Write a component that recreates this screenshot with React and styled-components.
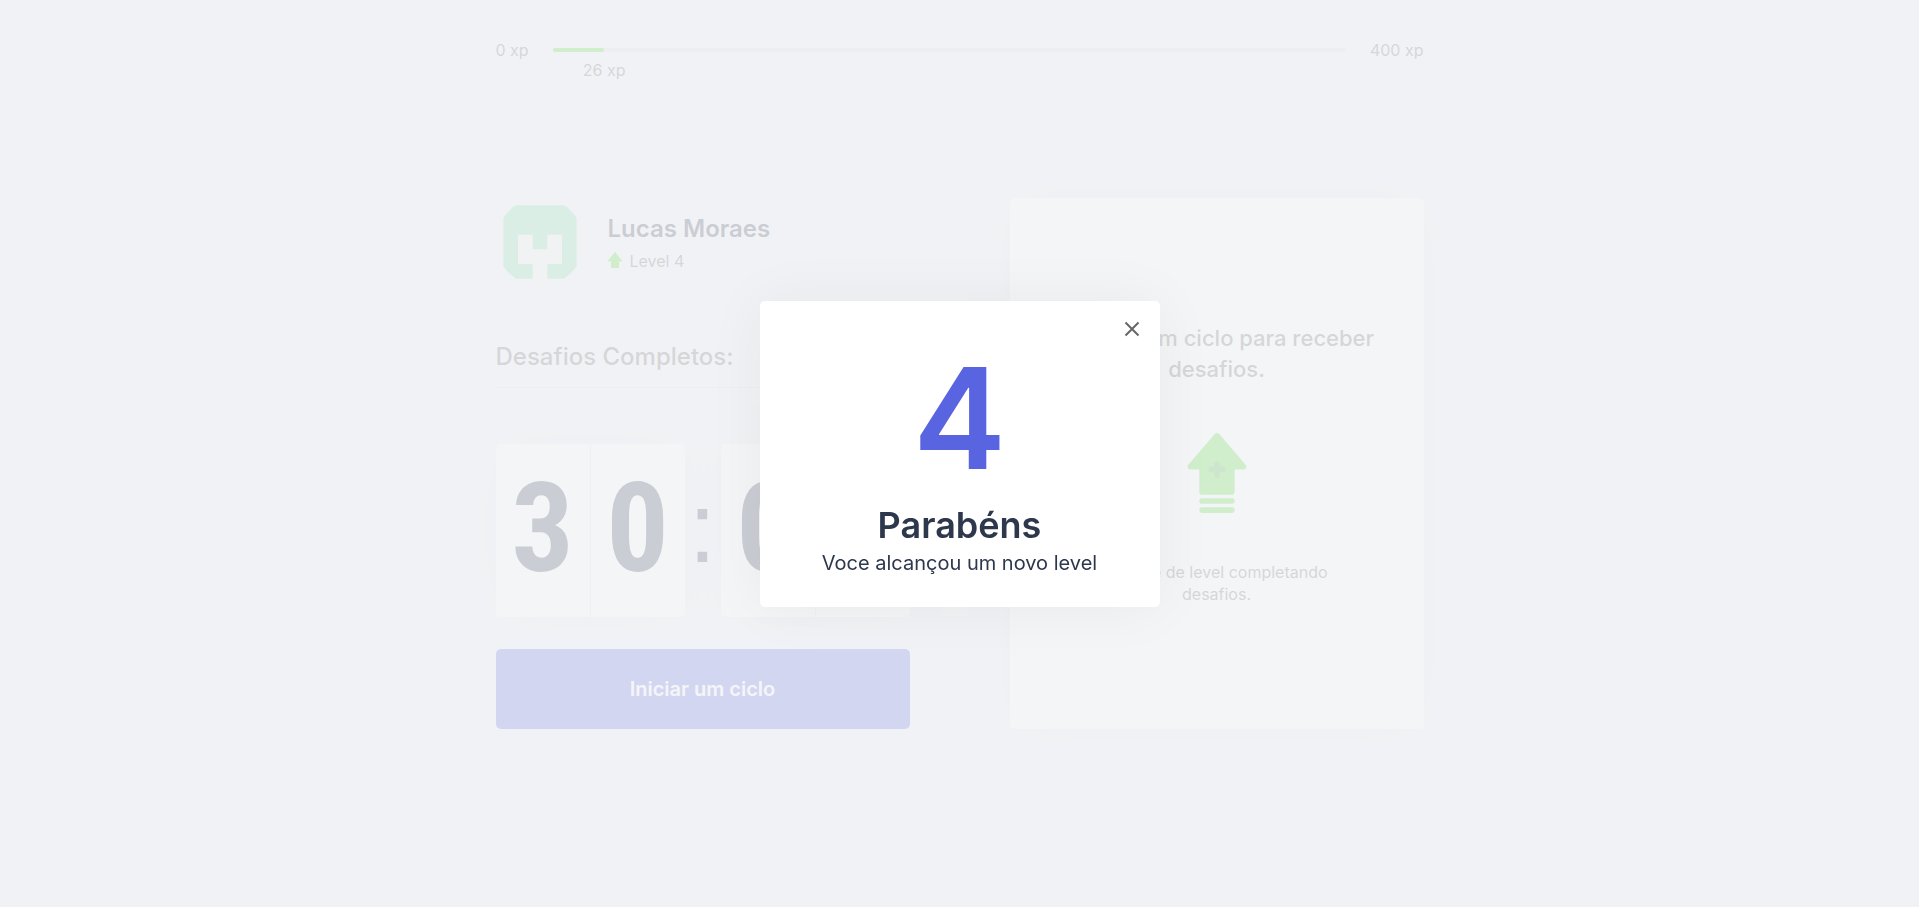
import React from 'react';
import styled, { createGlobalStyle, ThemeProvider } from 'styled-components';

const theme = {
  white: '#ffffff',
  background: '#f0f1f5',
  grayLine: '#dcdde0',
  text: '#666666',
  title: '#2e384d',
  green: '#4cd62b',
  greenDark: '#3cae30',
  blue: '#5965e0',
  shadow: '0 0 60px rgba(0, 0, 0, 0.05)',
};

const GlobalStyle = createGlobalStyle`
  * {
    margin: 0;
    padding: 0;
    box-sizing: border-box;
  }

  body {
    background: ${theme.background};
    color: ${theme.text};
  }

  body, button {
    font: 400 16px/20px Inter, sans-serif;
  }

  button {
    border: 0;
    cursor: pointer;
  }
`;

const Container = styled.div`
  display: flex;
  flex-direction: column;
  min-height: 100vh;
  max-width: 992px;
  margin: 0 auto;
  padding: 40px 32px;
`;

const ExperienceBar = styled.header`
  display: flex;
  align-items: center;
`;

const Track = styled.div`
  position: relative;
  flex: 1;
  height: 4px;
  margin: 0 24px;
  border-radius: 4px;
  background: ${({ theme }) => theme.grayLine};
`;

const Progress = styled.div`
  height: 4px;
  border-radius: 4px;
  background: ${({ theme }) => theme.green};
`;

const CurrentExperience = styled.span`
  position: absolute;
  top: 12px;
  transform: translateX(-50%);
`;

const Dashboard = styled.main`
  flex: 1;
  display: grid;
  grid-template-columns: 1fr 1fr;
  gap: 100px;
  align-content: center;
`;

const Profile = styled.div`
  display: flex;
  align-items: center;
`;

const Avatar = styled.svg`
  width: 88px;
  height: 88px;
  border-radius: 50%;
  background: #f0f0f0;
`;

const ProfileInfo = styled.div`
  margin-left: 24px;
`;

const UserName = styled.strong`
  display: block;
  font-size: 24px;
  font-weight: 600;
  line-height: 29px;
  color: ${({ theme }) => theme.title};
`;

const Level = styled.p`
  display: flex;
  align-items: center;
  gap: 8px;
  margin-top: 8px;
`;

const Completed = styled.div`
  margin: 56px 0;
  padding-bottom: 16px;
  border-bottom: 1px solid ${({ theme }) => theme.grayLine};
  display: flex;
  justify-content: space-between;
  font-size: 24px;
  font-weight: 500;
  line-height: 29px;
`;

const Countdown = styled.div`
  display: flex;
  align-items: center;
  font-family: "Liberation Sans Narrow", "Roboto Condensed", Roboto, sans-serif;
  font-weight: 700;
  color: ${({ theme }) => theme.title};
`;

const DigitPair = styled.div`
  flex: 1;
  display: flex;
  border-radius: 5px;
  background: ${({ theme }) => theme.white};
  box-shadow: ${({ theme }) => theme.shadow};
`;

const Digit = styled.span`
  flex: 1;
  padding-bottom: 3px;
  text-align: center;
  font-size: 124px;
  line-height: 170px;

  & + & {
    border-left: 1px solid #e4e5e9;
  }
`;

const Colon = styled.span`
  display: flex;
  justify-content: center;
  width: 36px;
  padding-bottom: 8px;
  font-family: "Liberation Sans", sans-serif;
  font-weight: 400;
  font-size: 100px;
  line-height: 120px;
`;

const StartButton = styled.button`
  display: block;
  width: 100%;
  height: 80px;
  margin-top: 32px;
  border-radius: 5px;
  background: ${({ theme }) => theme.blue};
  color: ${({ theme }) => theme.white};
  font-size: 20px;
  font-weight: 600;
`;

const ChallengeBox = styled.section`
  display: flex;
  flex-direction: column;
  align-items: center;
  justify-content: center;
  gap: 48px;
  padding: 24px 32px;
  border-radius: 5px;
  background: ${({ theme }) => theme.white};
  box-shadow: ${({ theme }) => theme.shadow};
  text-align: center;
`;

const ChallengeTitle = styled.h2`
  font-size: 22px;
  font-weight: 500;
  line-height: 31px;
`;

const ChallengeHint = styled.p`
  max-width: 70%;
  line-height: 22px;
`;

const Overlay = styled.div`
  position: fixed;
  inset: 0;
  display: flex;
  align-items: center;
  justify-content: center;
  background: rgba(241, 242, 245, 0.8);
`;

const Modal = styled.div`
  position: relative;
  width: 100%;
  max-width: 400px;
  padding: 32px 48px;
  border-radius: 5px;
  background: ${({ theme }) => theme.white};
  box-shadow: ${({ theme }) => theme.shadow};
  text-align: center;
  color: ${({ theme }) => theme.title};
`;

const NewLevel = styled.header`
  font-size: 140px;
  font-weight: 600;
  line-height: 170px;
  color: ${({ theme }) => theme.blue};
`;

const Congratulations = styled.strong`
  display: block;
  font-size: 36px;
  font-weight: 600;
  line-height: 44px;
`;

const ModalText = styled.p`
  margin-top: 4px;
  font-size: 20px;
  line-height: 24px;
`;

const CloseButton = styled.button`
  position: absolute;
  top: 16px;
  right: 16px;
  display: flex;
  background: transparent;
`;

function LevelIcon() {
  return (
    <svg width="14" height="18" viewBox="0 0 14 18" aria-hidden="true">
      <path d="M7 0 L14 8.4 Q14.2 9.4 13.3 9.4 H11 V16 H3 V9.4 H.7 Q-.2 9.4 0 8.4 Z" fill={theme.green} />
    </svg>
  );
}

function LevelUpIcon() {
  return (
    <svg width="60" height="80" viewBox="0 0 60 80" aria-hidden="true">
      <g fill={theme.green}>
        <path d="M27.7 .9 Q30 -.9 32.3 .9 L58.4 31.4 C60.7 33.8 59 36.4 56.6 36.4 H47.6 V59.5 Q47.6 61.8 45.3 61.8 H14.7 Q12.4 61.8 12.4 59.5 V36.4 H3.4 C1 36.4 -.7 33.8 1.6 31.4 Z" />
        <rect x="12.4" y="65.2" width="35.2" height="5.6" rx="2.4" />
        <rect x="12.4" y="74.3" width="35.2" height="5.6" rx="2.4" />
      </g>
      <path d="M30 30.7 V42.1 M24.3 36.4 H35.7" stroke={theme.greenDark} strokeWidth="5.6" strokeLinecap="round" />
    </svg>
  );
}

const digits = [['3', '0'], ['0', '0']];

export default function App() {
  const currentExperience = 26;
  const nextLevelExperience = 400;
  const percent = `${(currentExperience * 100) / nextLevelExperience}%`;

  return (
    <ThemeProvider theme={theme}>
      <GlobalStyle />
      <Container>
        <ExperienceBar>
          <span>0 xp</span>
          <Track>
            <Progress style={{ width: percent }} />
            <CurrentExperience style={{ left: percent }}>26 xp</CurrentExperience>
          </Track>
          <span>400 xp</span>
        </ExperienceBar>

        <Dashboard>
          <div>
            <Profile>
              <Avatar viewBox="0 0 420 420" role="img" aria-label="Lucas Moraes">
                <path
                  d="M35 35 H385 V385 H245 V315 H315 V175 H245 V245 H175 V175 H105 V315 H175 V385 H35 Z"
                  fill="#84dca4"
                />
              </Avatar>
              <ProfileInfo>
                <UserName>Lucas Moraes</UserName>
                <Level>
                  <LevelIcon />
                  Level 4
                </Level>
              </ProfileInfo>
            </Profile>

            <Completed>
              <span>Desafios Completos:</span>
              <span>4</span>
            </Completed>

            <Countdown>
              <DigitPair>
                {digits[0].map((d, i) => <Digit key={i}>{d}</Digit>)}
              </DigitPair>
              <Colon>:</Colon>
              <DigitPair>
                {digits[1].map((d, i) => <Digit key={i}>{d}</Digit>)}
              </DigitPair>
            </Countdown>

            <StartButton type="button">Iniciar um ciclo</StartButton>
          </div>

          <ChallengeBox>
            <ChallengeTitle>Finalize um ciclo para receber desafios.</ChallengeTitle>
            <LevelUpIcon />
            <ChallengeHint>Avance de level completando desafios.</ChallengeHint>
          </ChallengeBox>
        </Dashboard>
      </Container>

      <Overlay>
        <Modal role="dialog" aria-modal="true" aria-label="Parabéns">
          <NewLevel>4</NewLevel>
          <Congratulations>Parabéns</Congratulations>
          <ModalText>Voce alcançou um novo level</ModalText>
          <CloseButton type="button" aria-label="Fechar">
            <svg width="24" height="24" viewBox="0 0 24 24" aria-hidden="true">
              <path d="M5.5 5.5 L18.5 18.5 M18.5 5.5 L5.5 18.5" stroke={theme.text} strokeWidth="2" />
            </svg>
          </CloseButton>
        </Modal>
      </Overlay>
    </ThemeProvider>
  );
}
